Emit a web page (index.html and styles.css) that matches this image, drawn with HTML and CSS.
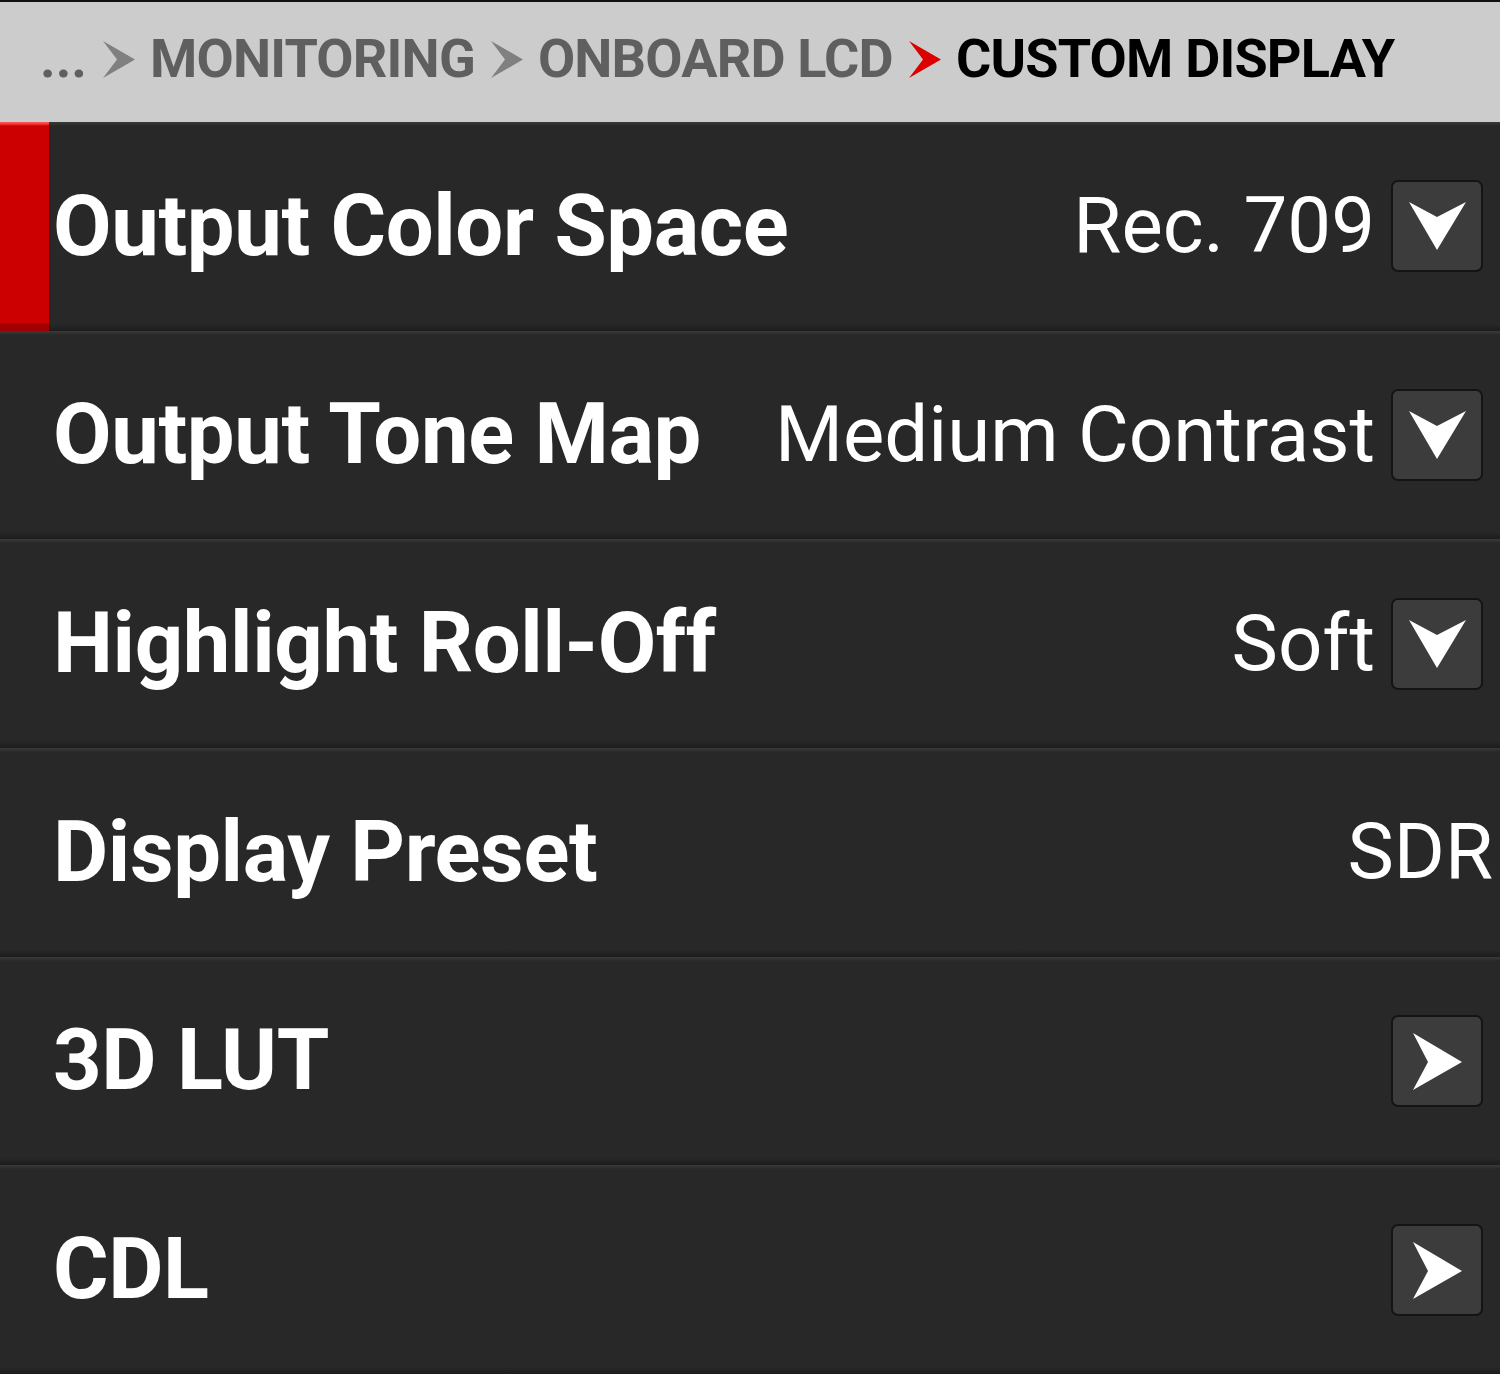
FILE: index.html
```html
<!DOCTYPE html>
<html>
<head>
<meta charset="utf-8">
<link rel="stylesheet" href="styles.css">
</head>
<body>
<header class="crumbs">
  <span class="crumb dots">...</span>
  <svg class="chev" viewBox="0 0 32 37"><polygon points="0,0 32,18.5 0,37 14,18.5" fill="#808080"/></svg>
  <span class="crumb">MONITORING</span>
  <svg class="chev" viewBox="0 0 32 37"><polygon points="0,0 32,18.5 0,37 14,18.5" fill="#808080"/></svg>
  <span class="crumb">ONBOARD LCD</span>
  <svg class="chev" viewBox="0 0 32 37"><polygon points="0,0 32,18.5 0,37 14,18.5" fill="#dd0000"/></svg>
  <span class="crumb current">CUSTOM DISPLAY</span>
</header>
<main class="list">
  <div class="row selected">
    <span class="label">Output Color Space</span>
    <span class="value">Rec. 709</span>
    <span class="btn"><svg viewBox="0 0 91 91"><polygon points="18,22 46,37 75,22 46,70" fill="#fff"/></svg></span>
  </div>
  <div class="row">
    <span class="label">Output Tone Map</span>
    <span class="value">Medium Contrast</span>
    <span class="btn"><svg viewBox="0 0 91 91"><polygon points="18,22 46,37 75,22 46,70" fill="#fff"/></svg></span>
  </div>
  <div class="row">
    <span class="label">Highlight Roll-Off</span>
    <span class="value">Soft</span>
    <span class="btn"><svg viewBox="0 0 91 91"><polygon points="18,22 46,37 75,22 46,70" fill="#fff"/></svg></span>
  </div>
  <div class="row">
    <span class="label">Display Preset</span>
    <span class="value plain">SDR</span>
  </div>
  <div class="row">
    <span class="label">3D LUT</span>
    <span class="btn"><svg viewBox="0 0 91 91"><polygon points="22,18 71,47 22,75 37,47" fill="#fff"/></svg></span>
  </div>
  <div class="row">
    <span class="label">CDL</span>
    <span class="btn"><svg viewBox="0 0 91 91"><polygon points="22,18 71,47 22,75 37,47" fill="#fff"/></svg></span>
  </div>
</main>
</body>
</html>
```

FILE: styles.css
```css
html, body {
  margin: 0;
  padding: 0;
}
body {
  width: 1500px;
  height: 1374px;
  overflow: hidden;
  background: #282828;
  font-family: Roboto, "Liberation Sans", sans-serif;
}
.crumbs {
  box-sizing: border-box;
  height: 122px;
  border-top: 2px solid #111;
  background: #cccccc;
  display: flex;
  align-items: center;
  padding-left: 40px;
  padding-bottom: 6px;
}
.crumb {
  font-size: 54px;
  font-weight: 700;
  letter-spacing: -0.8px;
  color: #5f5f5f;
  line-height: 1;
  white-space: nowrap;
}
.dots {
  letter-spacing: 0;
}
.chev {
  width: 32px;
  height: 37px;
  margin: 0 15px 0 16px;
  flex: none;
}
.current {
  color: #000;
}
.list {
  height: 1252px;
  display: grid;
  grid-template-rows: repeat(6, 1fr);
}
.row {
  position: relative;
  display: flex;
  align-items: center;
  padding-left: 53px;
  padding-right: 17px;
  background: linear-gradient(to bottom, #3a3a3a 0px, #282828 4px, #282828 calc(100% - 7px), #1c1c1c 100%);
}
.row.selected::before {
  content: "";
  position: absolute;
  left: 0;
  top: 0;
  bottom: 0;
  width: 49px;
  background: linear-gradient(to bottom, #ff5050 0px, #ff5050 1px, #cc0000 4px, #cc0000 calc(100% - 8px), #a00000 calc(100% - 7px), #a00000 100%);
}
.label {
  font-size: 85px;
  font-weight: 700;
  letter-spacing: -0.4px;
  color: #fff;
  line-height: 1;
  flex: 1;
  white-space: nowrap;
}
.value {
  font-size: 78px;
  font-weight: 400;
  color: #fff;
  line-height: 1;
  margin-right: 16px;
  white-space: nowrap;
}
.value.plain {
  margin-right: -10px;
}
.btn {
  box-sizing: border-box;
  width: 92px;
  height: 92px;
  border: 2px solid #141414;
  border-radius: 7px;
  background: #3c3c3c;
  flex: none;
  display: block;
}
.btn svg {
  display: block;
  width: 91px;
  height: 91px;
  margin: -2px;
}
```
